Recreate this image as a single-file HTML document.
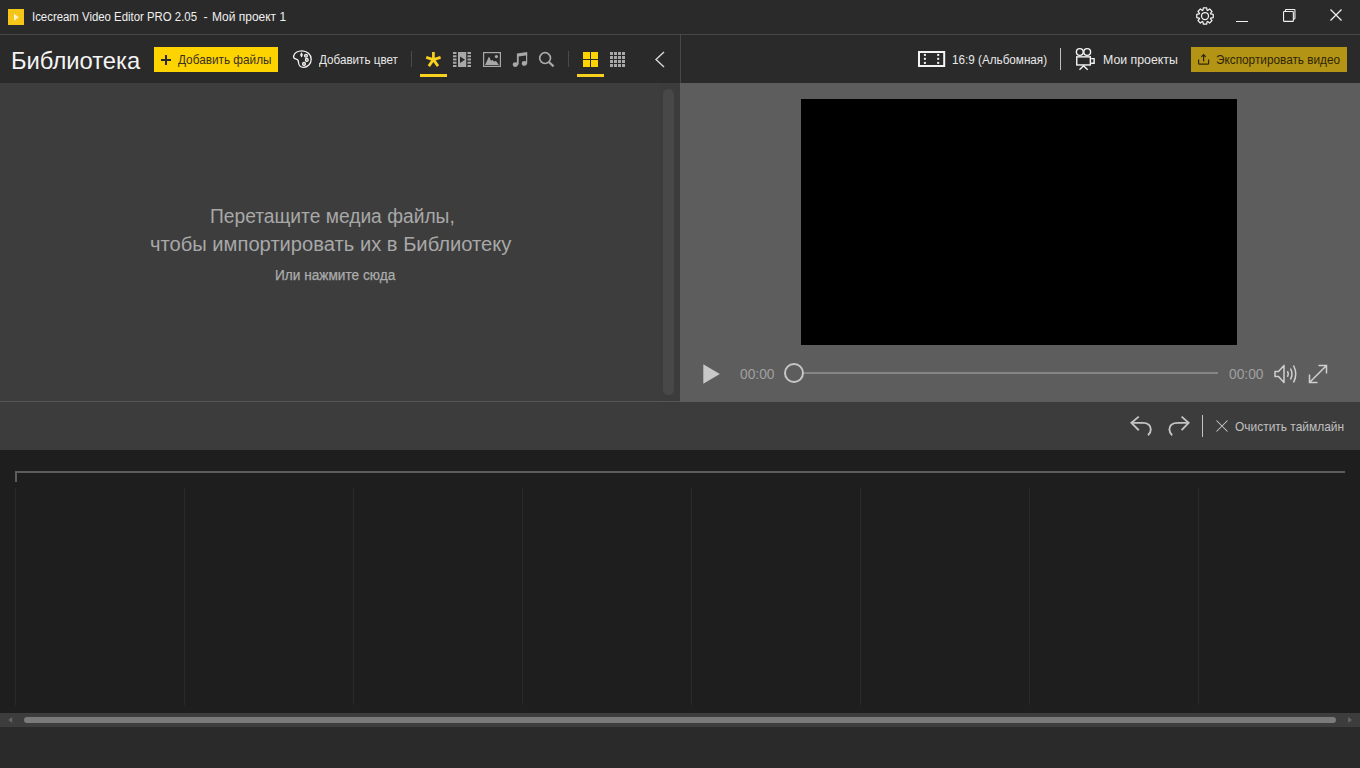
<!DOCTYPE html>
<html><head><meta charset="utf-8">
<style>
*{margin:0;padding:0;box-sizing:border-box}
html,body{width:1360px;height:768px;overflow:hidden;background:#2a2a2a;font-family:"Liberation Sans",sans-serif}
.a{position:absolute}
.t{position:absolute;white-space:nowrap;line-height:1}
svg{position:absolute;overflow:visible}
</style></head><body>
<!-- title bar -->
<div class="a" style="left:0;top:0;width:1360px;height:34px;background:#2a2a2a"></div>
<div class="a" style="left:0;top:34px;width:1360px;height:1px;background:#484848"></div>
<div class="a" style="left:8px;top:9px;width:16px;height:16px;background:#f5c518"></div>
<svg style="left:8px;top:9px" width="16" height="16"><path d="M6 4.8L10.8 8.25L6 11.7Z" fill="#fff2c8"/></svg>
<div class="t" id="title1" style="left:32px;top:11px;font-size:12.5px;color:#f0f0f0;transform-origin:0 0;transform:scaleX(0.911)">Icecream Video Editor PRO 2.05</div>
<div class="t" id="title2" style="left:203.5px;top:11px;font-size:12.5px;color:#f0f0f0;transform-origin:0 0">-</div>
<div class="t" id="title3" style="left:212px;top:11px;font-size:12.5px;color:#f0f0f0;transform-origin:0 0;transform:scaleX(0.958)">Мой проект 1</div>

<!-- toolbar -->
<div class="a" style="left:0;top:35px;width:1360px;height:48px;background:#2a2a2a"></div>
<div class="a" style="left:680px;top:35px;width:1px;height:48px;background:#484848"></div>


<!-- toolbar content -->
<div class="t" id="lib" style="left:10.5px;top:49px;font-size:24px;transform-origin:0 0;transform:scaleX(0.99);color:#f4f4f4">Библиотека</div>
<div class="a" style="left:154px;top:47px;width:124px;height:25px;background:#fdd300"></div>
<svg style="left:161px;top:55px" width="10" height="10"><path d="M5 0V10M0 5H10" stroke="#2a2a2a" stroke-width="2"/></svg>
<div class="t" id="addf" style="left:178px;top:53px;font-size:13px;transform-origin:0 0;transform:scaleX(0.906);color:#3a3020">Добавить файлы</div>
<svg style="left:292px;top:50px" width="20" height="19" viewBox="0 0 20 19"><g fill="none" stroke="#f2f2f2" stroke-width="1.3" stroke-linejoin="round"><path d="M10 0.8C15 0.8 19.2 4.5 19.2 9.2C19.2 13.8 15.6 17.3 11.5 17.3C8.2 17.3 6.5 14.8 6.5 12.2C6.5 10.6 6 9.6 4.2 9.2C2.4 8.8 1.3 7.9 1.6 6.2C2.2 3.2 5.5 0.8 10 0.8Z"/><path d="M9.5 3Q10.9 4.8 9.5 6.6Q8.1 4.8 9.5 3Z" stroke-width="1.1" stroke-linejoin="round"/></g><g fill="#9a9a9a" stroke="#f2f2f2" stroke-width="1.1"><circle cx="14" cy="5.8" r="1.5"/><circle cx="14.8" cy="9.9" r="1.5"/><circle cx="12" cy="13.9" r="1.5"/></g></svg>
<div class="t" id="addc" style="left:319px;top:53px;font-size:13px;transform-origin:0 0;transform:scaleX(0.897);color:#e8e8e8">Добавить цвет</div>
<div class="a" style="left:411px;top:51px;width:1px;height:16px;background:#4a4a4a"></div>


<!-- right toolbar -->
<svg style="left:918px;top:51px" width="28" height="16" viewBox="0 0 28 16"><rect x="1" y="1" width="25.2" height="14" fill="none" stroke="#f4f4f4" stroke-width="2"/><g fill="#f4f4f4"><rect x="5.9" y="2.9" width="2" height="2"/><rect x="5.9" y="6.8" width="2" height="2"/><rect x="5.9" y="10.9" width="2" height="2"/><rect x="19.2" y="2.9" width="2" height="2"/><rect x="19.2" y="6.8" width="2" height="2"/><rect x="19.2" y="10.9" width="2" height="2"/></g></svg>
<div class="t" id="ratio" style="left:952px;top:53px;font-size:13px;color:#e8e8e8;transform-origin:0 0;transform:scaleX(0.9)">16:9 (Альбомная)</div>
<div class="a" style="left:1060px;top:48px;width:1px;height:22px;background:#bdbdbd"></div>
<div class="t" id="proj" style="left:1103px;top:53px;font-size:13px;color:#e8e8e8;transform-origin:0 0;transform:scaleX(0.948)">Мои проекты</div>
<div class="a" style="left:1191px;top:47px;width:156px;height:25px;background:#b39414"></div>
<div class="t" id="exp" style="left:1216px;top:53px;font-size:13px;color:#2e2608;transform-origin:0 0;transform:scaleX(0.907)">Экспортировать видео</div>


<!-- tabs -->
<svg style="left:420px;top:48px" width="28" height="24" viewBox="0 0 28 24"><g stroke="#f8d020" stroke-width="2.7"><path d="M13.4 3.9V11.6M13.4 11.6L6.2 9.4M13.4 11.6L20.6 9.4M13.4 11.6L8.8 18.1M13.4 11.6L18 18.1"/></g></svg>
<div class="a" style="left:420px;top:74px;width:27px;height:3px;background:#f8d020"></div>
<svg style="left:453px;top:52px" width="18" height="15" viewBox="0 0 18 15"><g fill="#a8a8a8"><rect x="0" y="0" width="3.5" height="2"/><rect x="14.5" y="0" width="3.5" height="2"/><rect x="0" y="3.25" width="3.5" height="2"/><rect x="14.5" y="3.25" width="3.5" height="2"/><rect x="0" y="6.5" width="3.5" height="2"/><rect x="14.5" y="6.5" width="3.5" height="2"/><rect x="0" y="9.75" width="3.5" height="2"/><rect x="14.5" y="9.75" width="3.5" height="2"/><rect x="0" y="13" width="3.5" height="2"/><rect x="14.5" y="13" width="3.5" height="2"/><rect x="5" y="0" width="8.2" height="15"/></g><path d="M7 4.5L12 7.7L7 10.9Z" fill="#2b2b2b"/></svg>
<svg style="left:483px;top:52px" width="18" height="15" viewBox="0 0 18 15"><rect x="0.6" y="0.6" width="16.8" height="13.8" fill="none" stroke="#a8a8a8" stroke-width="1.2"/><path d="M2 13L6 4.4L8 8.8L9.6 8L11 9.5L13 9L16 13Z" fill="#a8a8a8"/><circle cx="13.4" cy="4.6" r="1.6" fill="#a8a8a8"/></svg>
<svg style="left:512px;top:51px" width="17" height="18" viewBox="0 0 17 18"><g fill="#a8a8a8"><path d="M4.9 2.5L15.2 1V4.2L6.7 5.4V13.6H4.9Z"/><path d="M14 3H15.2V12.4H14Z"/><ellipse cx="3.4" cy="13.6" rx="2.6" ry="2.3"/><ellipse cx="12.4" cy="12.4" rx="2.6" ry="2.3"/></g></svg>
<svg style="left:538px;top:51px" width="18" height="18" viewBox="0 0 18 18"><g fill="none" stroke="#a8a8a8"><circle cx="7.1" cy="7.1" r="5.4" stroke-width="1.7"/><path d="M10.9 11L15.6 15.4" stroke-width="2.3"/></g></svg>
<div class="a" style="left:568px;top:51px;width:1px;height:16px;background:#4a4a4a"></div>
<svg style="left:583px;top:52px" width="15" height="15" viewBox="0 0 15 15"><g fill="#fdd300"><rect x="0" y="0" width="7" height="7"/><rect x="8" y="0" width="7" height="7"/><rect x="0" y="8" width="7" height="7"/><rect x="8" y="8" width="7" height="7"/></g></svg>
<div class="a" style="left:577px;top:74px;width:27px;height:3px;background:#f8d020"></div>
<svg style="left:610px;top:52px" width="15" height="15" viewBox="0 0 15 15"><g fill="#a8a8a8"><rect x="0" y="0" width="3" height="3"/><rect x="4" y="0" width="3" height="3"/><rect x="8" y="0" width="3" height="3"/><rect x="12" y="0" width="3" height="3"/><rect x="0" y="4" width="3" height="3"/><rect x="4" y="4" width="3" height="3"/><rect x="8" y="4" width="3" height="3"/><rect x="12" y="4" width="3" height="3"/><rect x="0" y="8" width="3" height="3"/><rect x="4" y="8" width="3" height="3"/><rect x="8" y="8" width="3" height="3"/><rect x="12" y="8" width="3" height="3"/><rect x="0" y="12" width="3" height="3"/><rect x="4" y="12" width="3" height="3"/><rect x="8" y="12" width="3" height="3"/><rect x="12" y="12" width="3" height="3"/></g></svg>
<svg style="left:654px;top:51px" width="12" height="17" viewBox="0 0 12 17"><path d="M10 1L2 8.5L10 16" fill="none" stroke="#d8d8d8" stroke-width="1.4"/></svg>
<!-- window buttons -->
<svg style="left:1196px;top:7px" width="18" height="18" viewBox="0 0 18 18"><g fill="none" stroke="#f2f2f2" stroke-width="1.25" stroke-linejoin="round"><path d="M6.97 3.25L7.33 0.77L10.67 0.77L11.03 3.25A6.1 6.1 0 0 1 11.63 3.50L13.64 2.00L16.00 4.36L14.50 6.37A6.1 6.1 0 0 1 14.75 6.97L17.23 7.33L17.23 10.67L14.75 11.03A6.1 6.1 0 0 1 14.50 11.63L16.00 13.64L13.64 16.00L11.63 14.50A6.1 6.1 0 0 1 11.03 14.75L10.67 17.23L7.33 17.23L6.97 14.75A6.1 6.1 0 0 1 6.37 14.50L4.36 16.00L2.00 13.64L3.50 11.63A6.1 6.1 0 0 1 3.25 11.03L0.77 10.67L0.77 7.33L3.25 6.97A6.1 6.1 0 0 1 3.50 6.37L2.00 4.36L4.36 2.00L6.37 3.50A6.1 6.1 0 0 1 6.97 3.25Z"/><circle cx="9" cy="9" r="3.5"/></g></svg>
<div class="a" style="left:1236px;top:20.5px;width:12px;height:1.4px;background:#f0f0f0"></div>
<svg style="left:1283px;top:9px" width="13" height="13" viewBox="0 0 13 13"><g fill="none" stroke="#f0f0f0" stroke-width="1.1"><path d="M2.4 2.4V1.3Q2.4 .55 3.15 .55H11.2Q11.95 .55 11.95 1.3V9.3Q11.95 10.05 11.2 10.05H10.4"/><rect x=".55" y="2.5" width="9.8" height="9.9" rx=".7"/></g></svg>
<svg style="left:1330px;top:9px" width="12" height="12" viewBox="0 0 12 12"><path d="M.5 .5L11.5 11.5M11.5 .5L.5 11.5" stroke="#f0f0f0" stroke-width="1.3"/></svg>
<!-- camera -->
<svg style="left:1075px;top:48px" width="21" height="23" viewBox="0 0 21 23"><g fill="none" stroke="#f4f4f4" stroke-width="1.4"><circle cx="4.8" cy="4" r="3.4"/><circle cx="12.2" cy="4" r="3.4"/><rect x="1.75" y="8.85" width="13.6" height="8.1"/><path d="M16.1 10.6H19.1V15.2H16.1"/><path d="M4.5 21.8L8.5 17.7L12.7 21.8"/></g></svg>
<svg style="left:1197px;top:54px" width="13" height="11" viewBox="0 0 13 11"><g fill="none" stroke="#2e2608" stroke-width="1.2"><path d="M1.6 5.6V9.2Q1.6 10.2 2.6 10.2H10.6Q11.6 10.2 11.6 9.2V5.6"/><path d="M6.6 7.6V0.6M4.4 2.8L6.6 0.6L8.8 2.8"/></g></svg>

<!-- library panel -->
<div class="a" style="left:0;top:83px;width:680px;height:318px;background:#3d3d3d"></div>
<div class="a" style="left:0;top:401px;width:680px;height:1px;background:#555"></div>
<!-- preview panel -->
<div class="a" style="left:680px;top:83px;width:680px;height:319px;background:#5d5d5d"></div>
<div class="a" style="left:801px;top:99px;width:436px;height:246px;background:#000"></div>
<!-- library scrollbar -->
<div class="a" style="left:660px;top:83px;width:20px;height:318px;background:#3c3c3c"></div>
<div class="a" style="left:663px;top:89px;width:11px;height:306px;border-radius:5.5px;background:#494848"></div>
<!-- preview controls -->

<svg style="left:703px;top:364px" width="17" height="20" viewBox="0 0 17 20"><path d="M0.3 0.3L16.8 10L0.3 19.7Z" fill="#c8c8c8"/></svg>
<div class="a" style="left:804px;top:372px;width:414px;height:2px;background:#858585"></div>
<svg style="left:783px;top:362px" width="22" height="22" viewBox="0 0 22 22"><circle cx="11" cy="11" r="9" fill="#5d5d5d" stroke="#c6c6c6" stroke-width="2"/></svg>
<svg style="left:1274px;top:364px" width="24" height="20" viewBox="0 0 24 20"><g fill="none" stroke="#d0d0d0" stroke-width="1.5"><path d="M1 7.5H4.5L10 1.5V18.5L4.5 12.5H1Z" stroke-linejoin="round"/><path d="M13.5 7.2Q15 10 13.5 12.8"/><path d="M16.5 4.5Q19.5 10 16.5 15.5"/><path d="M19.5 1.5Q24 10 19.5 18.5"/></g></svg>
<svg style="left:1308px;top:364px" width="20" height="20" viewBox="0 0 20 20"><g fill="none" stroke="#d0d0d0" stroke-width="1.5"><path d="M1.5 18.5L18.5 1.5M10.5 1.5H18.5V9.5M1.5 10.5V18.5H9.5"/></g></svg>



<div class="t" id="drop1" style="left:210px;top:206px;font-size:20px;color:#a8a8a8;transform-origin:0 0;transform:scaleX(0.961)">Перетащите медиа файлы,</div>
<div class="t" id="drop2" style="left:150px;top:234px;font-size:20px;color:#a8a8a8;transform-origin:0 0;transform:scaleX(1.008)">чтобы импортировать их в Библиотеку</div>
<div class="t" id="drop3" style="left:275px;top:267.5px;font-size:14px;color:#acacac;-webkit-text-stroke:0.25px #acacac;transform-origin:0 0;transform:scaleX(0.975)">Или нажмите сюда</div>
<div class="t" id="time1" style="left:740px;top:367px;font-size:14px;color:#a0a0a0;transform-origin:0 0;transform:scaleX(0.984)">00:00</div>
<div class="t" id="time2" style="left:1229px;top:367px;font-size:14px;color:#a0a0a0;transform-origin:0 0;transform:scaleX(0.984)">00:00</div>

<!-- timeline toolbar -->
<div class="a" style="left:0;top:402px;width:1360px;height:48px;background:#3c3c3c"></div>

<!-- timeline toolbar icons -->
<svg style="left:1130px;top:416px" width="22" height="21" viewBox="0 0 22 21"><g fill="none" stroke="#c4c4c4" stroke-width="1.9"><path d="M8.8 .6L1.4 6.9L8.8 14.2"/><path d="M1.4 6.9H12.5Q20.8 6.9 20.8 13.6Q20.8 16.8 18 19.3"/></g></svg>
<svg style="left:1168px;top:416px" width="22" height="21" viewBox="0 0 22 21"><g fill="none" stroke="#c4c4c4" stroke-width="1.9"><path d="M13.6 .6L20.6 6.9L13.6 14.2"/><path d="M20.6 6.9H10Q1.4 6.9 1.4 13.6Q1.4 16.8 4.2 19.4"/></g></svg>
<div class="a" style="left:1202px;top:415px;width:1px;height:22px;background:#c4c4c4"></div>
<svg style="left:1216px;top:420px" width="12" height="12" viewBox="0 0 12 12"><path d="M.5 .5L11.5 11.5M11.5 .5L.5 11.5" stroke="#c8c8c8" stroke-width="1.05"/></svg>

<div class="t" id="clear" style="left:1235px;top:419.5px;font-size:13px;color:#c0c0c0;transform-origin:0 0;transform:scaleX(0.919)">Очистить таймлайн</div>
<!-- timeline -->
<div class="a" style="left:0;top:450px;width:1360px;height:263px;background:#1e1e1e"></div>

<div class="a" style="left:15px;top:471px;width:1330px;height:2px;background:#5c5c5c"></div>
<div class="a" style="left:15px;top:471px;width:2px;height:11px;background:#5c5c5c"></div>
<div class="a" style="left:15px;top:488px;width:1px;height:217px;background:#2a2a2a"></div><div class="a" style="left:184px;top:488px;width:1px;height:217px;background:#2a2a2a"></div><div class="a" style="left:353px;top:488px;width:1px;height:217px;background:#2a2a2a"></div><div class="a" style="left:522px;top:488px;width:1px;height:217px;background:#2a2a2a"></div><div class="a" style="left:691px;top:488px;width:1px;height:217px;background:#2a2a2a"></div><div class="a" style="left:860px;top:488px;width:1px;height:217px;background:#2a2a2a"></div><div class="a" style="left:1029px;top:488px;width:1px;height:217px;background:#2a2a2a"></div><div class="a" style="left:1198px;top:488px;width:1px;height:217px;background:#2a2a2a"></div>

<!-- scrollbar -->
<div class="a" style="left:0;top:713px;width:1360px;height:14px;background:#3d3d3d"></div>
<div class="a" style="left:24px;top:717px;width:1312px;height:6px;border-radius:3px;background:#7a7a7a"></div>
<svg style="left:8px;top:717px" width="5" height="6" viewBox="0 0 5 6"><path d="M4.2 0V5.8L.2 2.9Z" fill="#676767"/></svg>
<svg style="left:1347.5px;top:717px" width="5" height="6" viewBox="0 0 5 6"><path d="M.2 0V5.8L4 2.9Z" fill="#676767"/></svg>
</body></html>
